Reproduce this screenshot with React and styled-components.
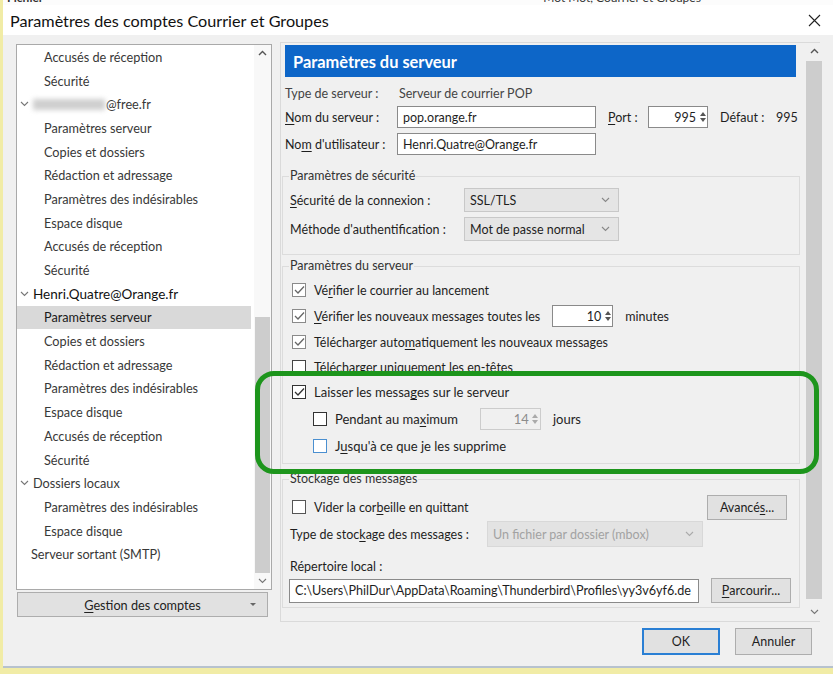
import React from 'react';
import styled, { createGlobalStyle, css } from 'styled-components';

const GlobalStyle = createGlobalStyle`
  html, body { margin: 0; padding: 0; background: #f1eca6; }
  body { font-family: Lato, "Segoe UI", "Noto Sans", sans-serif; font-size: 12.5px; color: #1e1e1e; }
  * { box-sizing: border-box; }
  u { text-decoration-thickness: 1px; text-underline-offset: 2px; }
`;

const Screen = styled.div`
  position: relative;
  width: 833px;
  height: 674px;
  overflow: hidden;
  background: #f1eca6;
  display: flex;
  flex-direction: column;
`;

const BehindStrip = styled.div`
  height: 5px;
  margin-left: 3px;
  background: #fcfcfc;
  overflow: hidden;
  white-space: nowrap;
  font-size: 12px;
  font-weight: 700;
  line-height: 12px;
  color: #333;
  padding-left: 4px;
  & > span { display: inline-block; transform: translateY(-8px); }
  & > span + span { margin-left: 500px; font-weight: 400; }
`;

const Window = styled.div`
  margin-left: 3px;
  height: 663px;
  background: #f0f0f0;
  border-bottom: 2px solid #b7c2ce;
  display: flex;
  flex-direction: column;
`;

const TitleBar = styled.div`
  height: 30px;
  background: #ffffff;
  display: flex;
  align-items: center;
  justify-content: space-between;
  padding: 0 12px 0 7px;
  font-size: 16.2px;
  color: #111;
`;

const CloseGlyph = styled.svg`
  width: 13px;
  height: 13px;
`;

const Body = styled.div`
  flex: 1;
  display: flex;
  padding: 9px 0 0 13px;
`;

const LeftCol = styled.div`
  width: 256px;
  display: flex;
  flex-direction: column;
`;

const Tree = styled.div`
  height: 546px;
  background: #ffffff;
  border: 1px solid #a9a9a9;
  display: flex;
`;

const TreeList = styled.div`
  flex: 1;
  overflow: hidden;
  padding-right: 3px;
`;

const TreeRow = styled.div`
  height: 23.7px;
  display: flex;
  align-items: center;
  white-space: nowrap;
  color: #383838;
  font-size: 12.7px;
  padding-left: ${p => (p.$level === 1 ? 27 : 2)}px;
  ${p => p.$selected && css`background: #d9d9d9; color: #1a1a1a;`}
  ${p => p.$strong && css`font-size: 13.5px; color: #111;`}
`;

const Chevron = styled.svg`
  width: 9px;
  height: 6px;
  margin: 0 4px 0 1px;
  flex-shrink: 0;
`;

const ChevronSpacer = styled.span`
  display: inline-block;
  width: 12px;
  height: 1px;
`;

const BlurredName = styled.span`
  display: inline-block;
  width: 72px;
  height: 11px;
  margin-right: 1px;
  background: #cfcfcf;
  filter: blur(2.5px);
`;

const ScrollBar = styled.div`
  width: 17px;
  display: flex;
  flex-direction: column;
  align-items: center;
  background: ${p => p.$track};
`;

const ScrollArrow = styled.div`
  height: ${p => p.$h || 17}px;
  width: 100%;
  display: flex;
  align-items: center;
  justify-content: center;
  color: #606060;
`;

const ScrollTrack = styled.div`
  flex: 1;
  width: 100%;
  display: flex;
  flex-direction: column;
  align-items: center;
  padding-top: ${p => p.$offset}px;
`;

const ScrollThumb = styled.div`
  width: ${p => p.$w || 15}px;
  height: ${p => p.$h}px;
  background: #cdcdcd;
`;

const GestionButton = styled.div`
  margin: 2px 0 0 1px;
  width: 251px;
  height: 25px;
  background: #e1e1e1;
  border: 1px solid #adadad;
  display: flex;
  align-items: center;
  justify-content: center;
  position: relative;
  font-size: 12.7px;
  color: #222;
`;

const MiniArrow = styled.span`
  position: absolute;
  right: 11px;
  top: 10px;
  width: 0;
  height: 0;
  border-left: 3px solid transparent;
  border-right: 3px solid transparent;
  border-top: 3px solid #666;
`;

const RightCol = styled.div`
  margin-left: 8px;
  width: 540px;
  display: flex;
  flex-direction: column;
`;

const Panel = styled.div`
  margin-top: -2px;
  height: 580px;
  border: 1px solid #dadada;
  display: flex;
  background: #f0f0f0;
`;

const Content = styled.div`
  flex: 1;
  padding: 2px 6px 0 4px;
  display: flex;
  flex-direction: column;
`;

const Header = styled.div`
  height: 32px;
  background: #0d66c8;
  color: #ffffff;
  font-weight: 700;
  font-size: 16.4px;
  display: flex;
  align-items: center;
  padding-left: 8px;
  margin-right: 4px;
`;

const FieldRow = styled.div`
  display: flex;
  align-items: center;
  height: ${p => p.$h || 22}px;
  margin-top: ${p => p.$mt || 0}px;
  white-space: nowrap;
`;

const Label = styled.span`
  width: ${p => (p.$w ? `${p.$w}px` : 'auto')};
  flex-shrink: 0;
  margin-left: ${p => p.$ml || 0}px;
  color: ${p => (p.$muted ? '#444' : '#1e1e1e')};
  font-size: ${p => p.$fs || 12.5}px;
`;

const TextBox = styled.div`
  width: ${p => p.$w}px;
  height: ${p => p.$h || 22}px;
  margin-left: ${p => p.$ml || 0}px;
  background: ${p => (p.$disabled ? '#f0f0f0' : '#ffffff')};
  border: 1px solid ${p => (p.$disabled ? '#cccccc' : '#8a8a8a')};
  display: flex;
  align-items: center;
  padding: 0 5px;
  color: ${p => (p.$disabled ? '#8c8c8c' : '#1e1e1e')};
  font-size: ${p => p.$fs || 12.5}px;
  overflow: hidden;
  white-space: nowrap;
  flex-shrink: 0;
`;

const NumberBox = styled.div`
  width: ${p => p.$w}px;
  height: ${p => p.$h || 22}px;
  margin-left: ${p => p.$ml || 0}px;
  display: flex;
  flex-shrink: 0;
`;

const NumberField = styled.div`
  flex: 1;
  background: ${p => (p.$disabled ? '#f0f0f0' : '#ffffff')};
  border: 1px solid ${p => (p.$disabled ? '#cccccc' : '#8a8a8a')};
  border-right: none;
  display: flex;
  align-items: center;
  justify-content: flex-end;
  padding-right: 2px;
  color: ${p => (p.$disabled ? '#8c8c8c' : '#1e1e1e')};
`;

const Spinner = styled.div`
  width: 10px;
  display: flex;
  flex-direction: column;
  justify-content: center;
  gap: 2px;
  align-items: center;
  background: ${p => (p.$disabled ? '#f0f0f0' : '#fff')};
  border: 1px solid ${p => (p.$disabled ? '#cccccc' : '#8a8a8a')};
  border-left: none;
`;

const Tri = styled.span`
  width: 0;
  height: 0;
  border-left: 3px solid transparent;
  border-right: 3px solid transparent;
  ${p => (p.$up
    ? css`border-bottom: 4px solid ${p.$disabled ? '#aaa' : '#555'};`
    : css`border-top: 4px solid ${p.$disabled ? '#aaa' : '#555'};`)}
`;

const Select = styled.div`
  width: ${p => p.$w}px;
  height: ${p => p.$h || 24}px;
  margin-left: ${p => p.$ml || 0}px;
  background: ${p => (p.$disabled ? '#e3e3e3' : '#e5e5e5')};
  border: 1px solid ${p => (p.$disabled ? '#d8d8d8' : '#c8c8c8')};
  display: flex;
  align-items: center;
  justify-content: space-between;
  padding: 0 8px 0 5px;
  color: ${p => (p.$disabled ? '#a2a2a2' : '#1e1e1e')};
  flex-shrink: 0;
`;

const Group = styled.fieldset`
  margin: ${p => p.$mt}px 0 0 -3px;
  padding: ${p => p.$pt || 0}px 0 ${p => p.$pb || 0}px 7px;
  border: 1px solid #dcdcdc;
  width: 518px;
  min-width: 0;
`;

const Legend = styled.legend`
  padding: 0 1px;
  margin-left: -1px;
  font-size: 12.5px;
  color: #333;
  line-height: 14px;
`;

const CheckRow = styled.div`
  height: ${p => p.$h || 26}px;
  display: flex;
  align-items: center;
  white-space: nowrap;
  padding-left: ${p => p.$indent || 2}px;
  font-size: ${p => p.$fs || 12.5}px;
`;

const Box = styled.span`
  width: 14px;
  height: 14px;
  flex-shrink: 0;
  border: 1px solid ${p => p.$border || '#333'};
  background: #fff;
  margin-right: ${p => p.$gap || 8}px;
  display: flex;
  align-items: center;
  justify-content: center;
`;

const Button = styled.div`
  width: ${p => p.$w}px;
  height: ${p => p.$h || 25}px;
  margin-left: ${p => p.$ml || 0}px;
  background: #e1e1e1;
  border: ${p => (p.$default ? '2px solid #2a7fd4' : '1px solid #adadad')};
  display: flex;
  align-items: center;
  justify-content: center;
  color: #1e1e1e;
  font-size: ${p => p.$fs || 12.5}px;
  flex-shrink: 0;
`;

const ButtonRow = styled.div`
  display: flex;
  justify-content: flex-end;
  gap: 15px;
  margin-top: 6px;
  padding-right: 8px;
`;

const Spacer = styled.div`
  flex: 1;
`;

const Highlight = styled.div`
  position: absolute;
  left: 255px;
  top: 371px;
  width: 564px;
  height: 103px;
  border: 5px solid #1d951c;
  border-radius: 19px;
  pointer-events: none;
`;

const ChevDown = ({ color = '#666' }) => (
  <svg width="9" height="6" viewBox="0 0 9 6">
    <path d="M1 1 L4.5 4.5 L8 1" fill="none" stroke={color} strokeWidth="1.1" />
  </svg>
);

const ChevUp = ({ color = '#555' }) => (
  <svg width="9" height="6" viewBox="0 0 9 6">
    <path d="M1 5 L4.5 1.5 L8 5" fill="none" stroke={color} strokeWidth="1.4" />
  </svg>
);

const Check = ({ color = '#333' }) => (
  <svg width="11" height="10" viewBox="0 0 11 10">
    <path d="M1 5 L4 8 L10 1.5" fill="none" stroke={color} strokeWidth="1.3" />
  </svg>
);

const CheckBox = ({ checked, border, mark }) => (
  <Box $border={border}>{checked && <Check color={mark} />}</Box>
);

const Num = ({ value, w, ml, disabled }) => (
  <NumberBox $w={w} $ml={ml}>
    <NumberField $disabled={disabled}>{value}</NumberField>
    <Spinner $disabled={disabled}>
      <Tri $up $disabled={disabled} />
      <Tri $disabled={disabled} />
    </Spinner>
  </NumberBox>
);

const treeItems = [
  { t: 'Accusés de réception', l: 1 },
  { t: 'Sécurité', l: 1 },
  { t: '@free.fr', l: 0, blur: true },
  { t: 'Paramètres serveur', l: 1 },
  { t: 'Copies et dossiers', l: 1 },
  { t: 'Rédaction et adressage', l: 1 },
  { t: 'Paramètres des indésirables', l: 1 },
  { t: 'Espace disque', l: 1 },
  { t: 'Accusés de réception', l: 1 },
  { t: 'Sécurité', l: 1 },
  { t: 'Henri.Quatre@Orange.fr', l: 0, strong: true },
  { t: 'Paramètres serveur', l: 1, sel: true },
  { t: 'Copies et dossiers', l: 1 },
  { t: 'Rédaction et adressage', l: 1 },
  { t: 'Paramètres des indésirables', l: 1 },
  { t: 'Espace disque', l: 1 },
  { t: 'Accusés de réception', l: 1 },
  { t: 'Sécurité', l: 1 },
  { t: 'Dossiers locaux', l: 0 },
  { t: 'Paramètres des indésirables', l: 1 },
  { t: 'Espace disque', l: 1 },
  { t: 'Serveur sortant (SMTP)', l: 0, noChevron: true },
];

export default function App() {
  return (
    <>
      <GlobalStyle />
      <Screen>
        <BehindStrip>
          <span>Fichier</span>
          <span>Mot Mot, Courrier et Groupes</span>
        </BehindStrip>
        <Window>
          <TitleBar>
            <span>Paramètres des comptes Courrier et Groupes</span>
            <CloseGlyph viewBox="0 0 13 13">
              <path d="M1 1 L12 12 M12 1 L1 12" stroke="#222" strokeWidth="1.1" />
            </CloseGlyph>
          </TitleBar>
          <Body>
            <LeftCol>
              <Tree>
                <TreeList>
                  {treeItems.map((it, i) => (
                    <TreeRow key={i} $level={it.l} $selected={it.sel} $strong={it.strong}>
                      {it.l === 0 && !it.noChevron && (
                        <Chevron viewBox="0 0 9 6">
                          <path d="M1 1 L4.5 4.5 L8 1" fill="none" stroke="#777" strokeWidth="1.1" />
                        </Chevron>
                      )}
                      {it.noChevron && <ChevronSpacer />}
                      {it.blur && <BlurredName />}
                      {it.t}
                    </TreeRow>
                  ))}
                </TreeList>
                <ScrollBar $track="#f8f8f8">
                  <ScrollArrow $h={17}><ChevUp /></ScrollArrow>
                  <ScrollTrack $offset={255}>
                    <ScrollThumb $h={256} />
                  </ScrollTrack>
                  <ScrollArrow $h={17}><ChevDown color="#777" /></ScrollArrow>
                </ScrollBar>
              </Tree>
              <GestionButton>
                <span><u>G</u>estion des comptes</span>
                <MiniArrow />
              </GestionButton>
            </LeftCol>

            <RightCol>
              <Panel>
                <Content>
                  <Header>Paramètres du serveur</Header>

                  <FieldRow $mt={5}>
                    <Label $w={114} $muted>Type de serveur :</Label>
                    <Label $muted>Serveur de courrier POP</Label>
                  </FieldRow>

                  <FieldRow $mt={2}>
                    <Label $w={112}><u>N</u>om du serveur :</Label>
                    <TextBox $w={199}>pop.orange.fr</TextBox>
                    <Label $ml={12} $w={40}><u>P</u>ort :</Label>
                    <Num value="995" w={60} />
                    <Label $ml={12} $w={56}>Défaut :</Label>
                    <Label>995</Label>
                  </FieldRow>

                  <FieldRow $mt={5}>
                    <Label $w={112}>No<u>m</u> d'utilisateur :</Label>
                    <TextBox $w={199}>Henri.Quatre@Orange.fr</TextBox>
                  </FieldRow>

                  <Group $mt={14} $pt={5} $pb={13}>
                    <Legend>Paramètres de sécurité</Legend>
                    <FieldRow $h={24}>
                      <Label $w={174}><u>S</u>écurité de la connexion :</Label>
                      <Select $w={155}>SSL/TLS <ChevDown color="#888" /></Select>
                    </FieldRow>
                    <FieldRow $h={24} $mt={5}>
                      <Label $w={174}>Méthode d'authent<u>i</u>fication :</Label>
                      <Select $w={155}>Mot de passe normal <ChevDown color="#888" /></Select>
                    </FieldRow>
                  </Group>

                  <Group $mt={4} $pt={4} $pb={4}>
                    <Legend>Paramètres du serveur</Legend>
                    <CheckRow>
                      <CheckBox checked border="#8a8a8a" mark="#666" />
                      <span>Vé<u>r</u>ifier le courrier au lancement</span>
                    </CheckRow>
                    <CheckRow>
                      <CheckBox checked border="#8a8a8a" mark="#666" />
                      <span><u>V</u>érifier les nouveaux messages toutes les</span>
                      <Num value="10" w={61} ml={12} />
                      <Label $ml={12}>minutes</Label>
                    </CheckRow>
                    <CheckRow>
                      <CheckBox checked border="#8a8a8a" mark="#666" />
                      <span>Télécharger auto<u>m</u>atiquement les nouveaux messages</span>
                    </CheckRow>
                    <CheckRow $h={24}>
                      <CheckBox border="#444" />
                      <span>Téléchar<u>g</u>er uniquement les en-têtes</span>
                    </CheckRow>
                    <CheckRow $fs={13}>
                      <CheckBox checked border="#333" />
                      <span>Laisser les messa<u>g</u>es sur le serveur</span>
                    </CheckRow>
                    <CheckRow $indent={23} $fs={13} $h={27}>
                      <CheckBox border="#333" />
                      <span>Pendant au ma<u>x</u>imum</span>
                      <Num value="14" w={61} ml={22} disabled />
                      <Label $ml={12} $fs={13}>jours</Label>
                    </CheckRow>
                    <CheckRow $indent={23} $fs={13} $h={27}>
                      <CheckBox border="#4a8fd0" />
                      <span>J<u>u</u>squ'à ce que je les supprime</span>
                    </CheckRow>
                  </Group>

                  <Group $mt={8} $pt={8} $pb={4}>
                    <Legend>Stockage des messages</Legend>
                    <CheckRow>
                      <CheckBox border="#555" />
                      <span>Vider la cor<u>b</u>eille en quittant</span>
                      <Spacer />
                      <Button $w={80} $h={25}>Avancé<u>s</u>...</Button>
                      <ChevronSpacer />
                    </CheckRow>
                    <FieldRow $h={26} $mt={1}>
                      <Label $w={197}>Type de stoc<u>k</u>age des messages :</Label>
                      <Select $w={216} $h={26} $disabled>Un fichier par dossier (mbox) <ChevDown color="#aaa" /></Select>
                    </FieldRow>
                    <FieldRow $h={22} $mt={8}>
                      <Label>Répertoire local :</Label>
                    </FieldRow>
                    <FieldRow $h={25} $mt={1}>
                      <TextBox $w={410} $h={24} $ml={-1} $fs={12.6}>C:\Users\PhilDur\AppData\Roaming\Thunderbird\Profiles\yy3v6yf6.de</TextBox>
                      <Button $w={80} $h={25} $ml={12}><u>P</u>arcourir...</Button>
                    </FieldRow>
                  </Group>
                </Content>
                <ScrollBar $track="#f0f0f0">
                  <ScrollArrow $h={16}><ChevUp /></ScrollArrow>
                  <ScrollTrack $offset={2}>
                    <ScrollThumb $h={538} $w={16} />
                  </ScrollTrack>
                  <ScrollArrow $h={18}><ChevDown color="#777" /></ScrollArrow>
                </ScrollBar>
              </Panel>
              <ButtonRow>
                <Button $w={78} $h={27} $default>OK</Button>
                <Button $w={77} $h={27}>Annuler</Button>
              </ButtonRow>
            </RightCol>
          </Body>
        </Window>
        <Highlight />
      </Screen>
    </>
  );
}
